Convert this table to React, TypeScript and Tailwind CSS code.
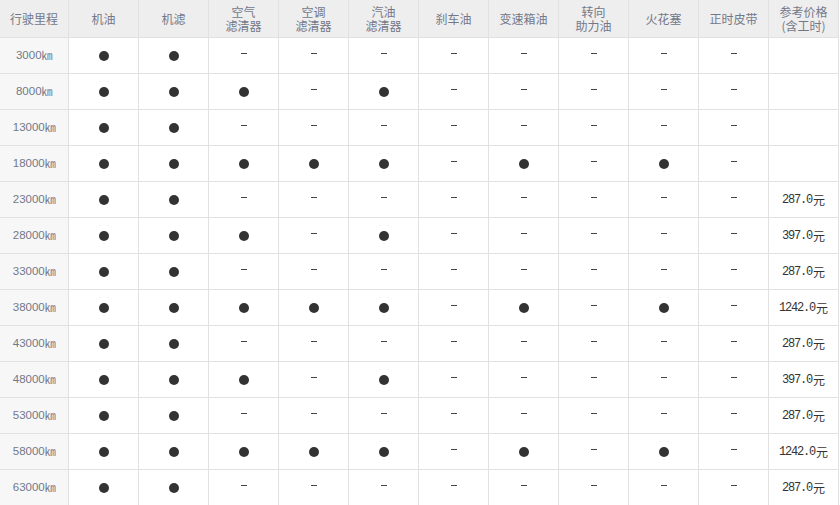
import React from 'react';

const headers = [
  ['行驶里程'],
  ['机油'],
  ['机滤'],
  ['空气', '滤清器'],
  ['空调', '滤清器'],
  ['汽油', '滤清器'],
  ['刹车油'],
  ['变速箱油'],
  ['转向', '助力油'],
  ['火花塞'],
  ['正时皮带'],
  ['参考价格', '(含工时)'],
];

// 1 = dot, 0 = dash, per column after mileage (10 items), then price
const rows: { km: string; items: number[]; price: string }[] = [
  { km: '3000', items: [1, 1, 0, 0, 0, 0, 0, 0, 0, 0], price: '' },
  { km: '8000', items: [1, 1, 1, 0, 1, 0, 0, 0, 0, 0], price: '' },
  { km: '13000', items: [1, 1, 0, 0, 0, 0, 0, 0, 0, 0], price: '' },
  { km: '18000', items: [1, 1, 1, 1, 1, 0, 1, 0, 1, 0], price: '' },
  { km: '23000', items: [1, 1, 0, 0, 0, 0, 0, 0, 0, 0], price: '287.0' },
  { km: '28000', items: [1, 1, 1, 0, 1, 0, 0, 0, 0, 0], price: '397.0' },
  { km: '33000', items: [1, 1, 0, 0, 0, 0, 0, 0, 0, 0], price: '287.0' },
  { km: '38000', items: [1, 1, 1, 1, 1, 0, 1, 0, 1, 0], price: '1242.0' },
  { km: '43000', items: [1, 1, 0, 0, 0, 0, 0, 0, 0, 0], price: '287.0' },
  { km: '48000', items: [1, 1, 1, 0, 1, 0, 0, 0, 0, 0], price: '397.0' },
  { km: '53000', items: [1, 1, 0, 0, 0, 0, 0, 0, 0, 0], price: '287.0' },
  { km: '58000', items: [1, 1, 1, 1, 1, 0, 1, 0, 1, 0], price: '1242.0' },
  { km: '63000', items: [1, 1, 0, 0, 0, 0, 0, 0, 0, 0], price: '287.0' },
];

const cell = 'flex items-center justify-center border-r border-b border-[#e1e1e1]';

export default function App() {
  return (
    <div className="w-[840px] h-[505px] overflow-hidden bg-white font-['Noto_Sans_CJK_SC',sans-serif]">
      <div className="grid grid-cols-[69px_repeat(11,70px)] grid-rows-[38px_repeat(13,36px)]">
        {/* Header */}
        {headers.map((h, i) => (
          <div key={i} className={`${cell} flex-col bg-[#eeeeee] text-[12px] leading-[15px] text-[#737889]`}>
            {h.map((line) => (
              <span key={line} className="block h-[14px] leading-[14px]">{line}</span>
            ))}
          </div>
        ))}

        {/* Body */}
        {rows.map((r) => (
          <React.Fragment key={r.km}>
            <div className={`${cell} bg-[#f7f7f7] text-[11.5px] text-[#737889]`}>
              <span className="font-['Liberation_Sans',sans-serif]">{r.km}</span>
              <span className="text-[11px] tracking-[-0.5px]">㎞</span>
            </div>
            {r.items.map((v, j) => (
              <div key={j} className={cell}>
                {v ? (
                  <span className="block w-[10px] h-[10px] rounded-full bg-[#333333]" />
                ) : (
                  <span className="block w-[6px] h-px bg-[#444444] -translate-y-[2px]" />
                )}
              </div>
            ))}
            <div className={`${cell} text-[12px] text-[#333333]`}>
              {r.price && (
                <span className="flex items-center">
                  <span className="font-['Liberation_Mono',monospace] tracking-[-1.2px]">{r.price}</span>
                  <span className="ml-[1px]">元</span>
                </span>
              )}
            </div>
          </React.Fragment>
        ))}
      </div>
    </div>
  );
}
